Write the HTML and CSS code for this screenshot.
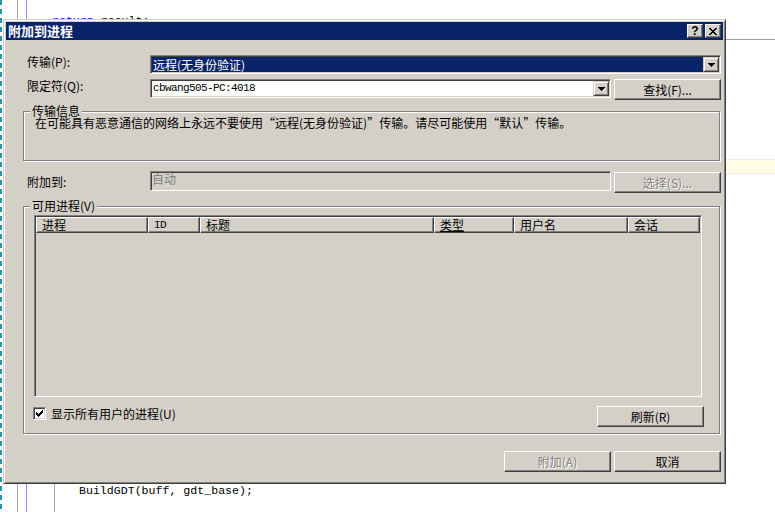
FILE: index.html
```html
<!DOCTYPE html>
<html lang="zh-CN">
<head>
<meta charset="utf-8">
<title>附加到进程</title>
<link rel="stylesheet" href="styles.css">
</head>
<body>
<div class="screen">
  <div class="editor">
    <div class="gutter-dash"></div>
    <div class="gutter-a"></div>
    <div class="code">
      <div class="code-line top-line"><span class="kw">return</span> result;</div>
      <div class="sep"></div>
      <div class="curline"></div>
      <div class="spacer"></div>
      <div class="bottom-block"><div class="guide"><span class="code-line">BuildGDT(buff, gdt_base);</span></div></div>
    </div>
  </div>

  <div class="dialog">
    <div class="titlebar">
      <span class="title">附加到进程</span>
      <div class="tb-buttons">
        <span class="tb-btn help">?</span>
        <span class="tb-btn close">
          <svg width="8" height="7" viewBox="0 0 8 7" shape-rendering="crispEdges"><path fill="#000" d="M0 0h2v1H0zM6 0h2v1H6zM1 1h2v1H1zM5 1h2v1H5zM2 2h4v1H2zM3 3h2v1H3zM2 4h4v1H2zM1 5h2v1H1zM5 5h2v1H5zM0 6h2v1H0zM6 6h2v1H6z"/></svg>
        </span>
      </div>
    </div>

    <div class="body">
      <div class="row r1">
        <label class="lbl">传输(P):</label>
        <div class="combo wide">
          <div class="combo-text selected">远程(无身份验证)</div>
          <span class="drop-btn"><svg width="7" height="4" viewBox="0 0 7 4" shape-rendering="crispEdges"><path fill="#000" d="M0 0h7v1H0zM1 1h5v1H1zM2 2h3v1H2zM3 3h1v1H3z"/></svg></span>
        </div>
      </div>

      <div class="row r2">
        <label class="lbl">限定符(Q):</label>
        <div class="combo narrow">
          <div class="combo-text mono">cbwang505-PC:4018</div>
          <span class="drop-btn"><svg width="7" height="4" viewBox="0 0 7 4" shape-rendering="crispEdges"><path fill="#000" d="M0 0h7v1H0zM1 1h5v1H1zM2 2h3v1H2zM3 3h1v1H3z"/></svg></span>
        </div>
        <button class="btn side-btn">查找(F)...</button>
      </div>

      <fieldset class="group info-group">
        <legend>传输信息</legend>
        <p class="info-text">在可能具有恶意通信的网络上永远不要使用<span class="q">“</span>远程(无身份验证)<span class="q">”</span>传输。请尽可能使用<span class="q">“</span>默认<span class="q">”</span>传输。</p>
      </fieldset>

      <div class="row r3">
        <label class="lbl">附加到:</label>
        <div class="field disabled-field">自动</div>
        <button class="btn disabled side-btn sel-btn">选择(S)...</button>
      </div>

      <fieldset class="group proc-group">
        <legend>可用进程(V)</legend>
        <div class="listview">
          <div class="lv-header">
            <span class="col c1">进程</span>
            <span class="col c2 mono">ID</span>
            <span class="col c3">标题</span>
            <span class="col c4"><span class="ul">类型</span></span>
            <span class="col c5">用户名</span>
            <span class="col c6">会话</span>
          </div>
        </div>
        <div class="row r4">
          <label class="check">
            <span class="box"><svg width="7" height="7" viewBox="0 0 7 7" shape-rendering="crispEdges"><path fill="#000" d="M6 0h1v1H6zM5 1h2v1H5zM0 2h1v1H0zM4 2h3v1H4zM0 3h2v1H0zM3 3h3v1H3zM0 4h5v1H0zM1 5h3v1H1zM2 6h1v1H2z"/></svg></span>
            <span>显示所有用户的进程(U)</span>
          </label>
          <button class="btn refresh">刷新(R)</button>
        </div>
      </fieldset>

      <div class="row actions">
        <button class="btn disabled">附加(A)</button>
        <button class="btn">取消</button>
      </div>
    </div>
  </div>
</div>
</body>
</html>
```

FILE: styles.css
```css
* { box-sizing: border-box; }
html, body { margin: 0; padding: 0; }
body {
  width: 775px;
  height: 512px;
  overflow: hidden;
  background: #fff;
  font-family: "Noto Sans CJK SC", "Noto Sans", sans-serif;
  font-size: 12px;
  color: #000;
}
.screen { position: relative; width: 775px; height: 512px; overflow: hidden; }

/* ---------- editor behind the dialog ---------- */
.editor { display: flex; height: 512px; }
.gutter-dash {
  flex: none;
  width: 2px;
  background: repeating-linear-gradient(to bottom, #1d98ad 0 5px, transparent 5px 9px);
}
.gutter-a { flex: none; width: 9px; margin-left: 15px; border-left: 1px solid #a8a8a8; }
.code {
  flex: 1;
  display: flex;
  flex-direction: column;
  border-left: 1px solid #8c8cff;
  padding-top: 13px;
}
.code-line {
  font-family: "Liberation Mono", monospace;
  font-size: 11.6px;
  line-height: 16px;
  white-space: pre;
  color: #000;
}
.top-line { padding-left: 25px; height: 16px; }
.kw { color: #0000ff; }
.sep { height: 1px; margin-top: 10px; background: #a0a0a0; }
.curline {
  height: 15px;
  margin-top: 119px;
  background: #fffde6;
  border-top: 1px solid #ececec;
  border-bottom: 1px solid #ececec;
}
.spacer { flex: 1; }
.bottom-block { height: 32px; }
.guide {
  height: 32px;
  margin-left: 27px;
  border-left: 1px solid #a8a8a8;
  padding-left: 24px;
}

/* ---------- dialog window ---------- */
.dialog {
  position: absolute;
  left: 3px;
  top: 19px;
  width: 723px;
  height: 465px;
  background: #d4d0c8;
  border: 1px solid;
  border-color: #d4d0c8 #404040 #404040 #d4d0c8;
  box-shadow: inset 1px 1px #fff, inset -1px -1px #808080;
  padding: 2px;
  display: flex;
  flex-direction: column;
}
.titlebar {
  flex: none;
  height: 18px;
  background: #0a246a;
  display: flex;
  align-items: center;
  padding: 0 2px;
}
.title {
  color: #fff;
  font-weight: bold;
  font-size: 13px;
  line-height: 18px;
}
.tb-buttons { margin-left: auto; display: flex; gap: 2px; }
.tb-btn {
  width: 16px;
  height: 14px;
  background: #d4d0c8;
  border: 1px solid;
  border-color: #fff #404040 #404040 #fff;
  box-shadow: inset -1px -1px #808080;
  display: flex;
  align-items: center;
  justify-content: center;
}
.help {
  font-family: "Liberation Sans", sans-serif;
  font-weight: bold;
  font-size: 12px;
  line-height: 1;
  padding-bottom: 1px;
}

.body {
  flex: 1;
  display: flex;
  flex-direction: column;
  padding: 0 2px 0 17px;
}
.row { display: flex; align-items: flex-start; }
.lbl { flex: none; width: 123px; line-height: 12px; white-space: nowrap; }

.r1 { margin-top: 15px; height: 19px; padding-left: 4px; }
.r1 .lbl { margin-top: 1px; }
.r2 { margin-top: 5px; height: 21px; padding-left: 4px; }
.r2 .lbl { margin-top: 1px; }

.combo, .field {
  height: 19px;
  background: #fff;
  border: 1px solid;
  border-color: #808080 #fff #fff #808080;
  box-shadow: inset 1px 1px #404040, inset -1px -1px #d4d0c8;
  padding: 1px;
  display: flex;
}
.combo.wide { flex: 1; }
.combo.narrow { width: 461px; flex: none; }
.combo-text {
  flex: 1;
  line-height: 15px;
  height: 15px;
  padding-left: 1px;
  white-space: nowrap;
  overflow: hidden;
}
.combo-text.selected { background: #0a246a; color: #fff; }
.mono {
  font-family: "Liberation Mono", monospace;
  font-size: 11px;
  letter-spacing: -0.6px;
}
.combo-text.mono { padding-left: 1px; }
.drop-btn {
  flex: none;
  width: 16px;
  height: 15px;
  background: #d4d0c8;
  border: 1px solid;
  border-color: #d4d0c8 #404040 #404040 #d4d0c8;
  box-shadow: inset 1px 1px #fff, inset -1px -1px #808080;
  display: flex;
  align-items: center;
  justify-content: center;
}

.btn {
  flex: none;
  width: 107px;
  height: 21px;
  margin: 0;
  padding: 0;
  background: #d4d0c8;
  border: 1px solid;
  border-color: #fff #404040 #404040 #fff;
  box-shadow: inset -1px -1px #808080;
  font-family: inherit;
  font-size: 12px;
  line-height: 12px;
  color: #000;
  display: flex;
  align-items: center;
  justify-content: center;
}
.btn.disabled { color: #808080; text-shadow: 1px 1px #fff; }
.row .side-btn { margin-left: 3px; }

/* group boxes */
.group {
  margin: 0 1px 0 0;
  padding: 0;
  min-width: 0;
  border: 1px solid #808080;
  box-shadow: inset 1px 1px #fff, 1px 1px #fff;
}
.group legend {
  margin-left: 6px;
  padding: 0 2px;
  line-height: 12px;
  background: #d4d0c8;
}
.info-group { margin-top: 5px; padding-bottom: 31px; }
.info-text { margin: 0 0 0 11px; line-height: 12px; white-space: nowrap; }
.q { font-feature-settings: "fwid"; }

.r3 { margin-top: 10px; height: 22px; padding-left: 4px; }
.r3 .lbl { margin-top: 5px; }
.field { flex: 1; height: 20px; }
.disabled-field {
  background: #d4d0c8;
  color: #808080;
  line-height: 12px;
  padding: 1px;
}
.row .sel-btn { margin-top: 1px; }

.proc-group { margin-top: 7px; padding-bottom: 6px; }
.listview {
  margin: 3px 17px 0 10px;
  height: 182px;
  border: 1px solid;
  border-color: #808080 #fff #fff #808080;
  box-shadow: inset 1px 1px #404040, inset -1px -1px #d4d0c8;
  padding: 1px;
  background: #d4d0c8;
}
.lv-header { display: flex; height: 16px; }
.col {
  flex: none;
  height: 16px;
  border: 1px solid;
  border-color: #fff #404040 #404040 #fff;
  box-shadow: inset -1px -1px #808080;
  padding: 1px 0 0 5px;
  line-height: 12px;
  white-space: nowrap;
  overflow: hidden;
}
.c1 { width: 112px; }
.c2 { width: 52px; }
.c3 { width: 234px; }
.c4 { width: 80px; }
.c5 { width: 114px; }
.c6 { width: 72px; }
.col.mono { font-size: 11px; }
.ul { text-decoration: underline; text-underline-offset: 1px; }

.r4 { margin-top: 9px; height: 21px; padding: 0 15px 0 9px; }
.check { display: flex; align-items: center; gap: 5px; margin-top: 1px; height: 13px; line-height: 12px; }
.box {
  flex: none;
  width: 13px;
  height: 13px;
  background: #fff;
  border: 1px solid;
  border-color: #808080 #fff #fff #808080;
  box-shadow: inset 1px 1px #404040, inset -1px -1px #d4d0c8;
  display: flex;
  align-items: center;
  justify-content: center;
}
.refresh { margin-left: auto; }

.actions { margin-top: 17px; justify-content: flex-end; gap: 3px; }
```
